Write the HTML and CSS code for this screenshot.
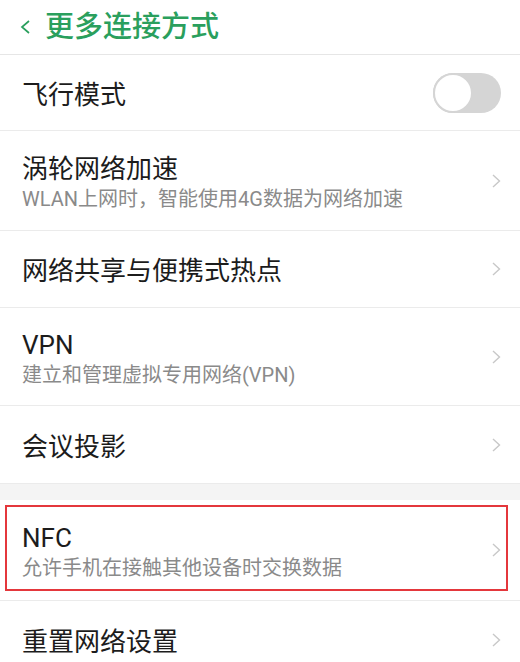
FILE: index.html
```html
<!DOCTYPE html>
<html lang="zh-CN">
<head>
<meta charset="utf-8">
<link rel="stylesheet" href="styles.css">
</head>
<body>
<div class="page">
  <header class="header">
    <svg class="back" width="11" height="14" viewBox="0 0 11 14"><path d="M9 1 L2 7 L9 13" fill="none" stroke="#2a9f5d" stroke-width="1.7"/></svg>
    <span class="title">更多连接方式</span>
  </header>
  <div class="row h75">
    <div class="text"><div class="label">飞行模式</div></div>
    <div class="toggle"><div class="knob"></div></div>
  </div>
  <div class="row h99">
    <div class="text"><div class="label">涡轮网络加速</div><div class="sub">WLAN上网时，智能使用4G数据为网络加速</div></div>
    <svg class="chev" width="9" height="14" viewBox="0 0 9 14"><path d="M1 1 L7.5 7 L1 13" fill="none" stroke="#c8c8c8" stroke-width="1.4"/></svg>
  </div>
  <div class="row h76">
    <div class="text"><div class="label">网络共享与便携式热点</div></div>
    <svg class="chev" width="9" height="14" viewBox="0 0 9 14"><path d="M1 1 L7.5 7 L1 13" fill="none" stroke="#c8c8c8" stroke-width="1.4"/></svg>
  </div>
  <div class="row h97">
    <div class="text"><div class="label">VPN</div><div class="sub">建立和管理虚拟专用网络(VPN)</div></div>
    <svg class="chev" width="9" height="14" viewBox="0 0 9 14"><path d="M1 1 L7.5 7 L1 13" fill="none" stroke="#c8c8c8" stroke-width="1.4"/></svg>
  </div>
  <div class="row h77">
    <div class="text"><div class="label">会议投影</div></div>
    <svg class="chev" width="9" height="14" viewBox="0 0 9 14"><path d="M1 1 L7.5 7 L1 13" fill="none" stroke="#c8c8c8" stroke-width="1.4"/></svg>
  </div>
  <div class="gap"></div>
  <div class="row h100 highlighted">
    <div class="text"><div class="label">NFC</div><div class="sub">允许手机在接触其他设备时交换数据</div></div>
    <svg class="chev" width="9" height="14" viewBox="0 0 9 14"><path d="M1 1 L7.5 7 L1 13" fill="none" stroke="#c8c8c8" stroke-width="1.4"/></svg>
    <div class="mark"></div>
  </div>
  <div class="row h76 last">
    <div class="text"><div class="label">重置网络设置</div></div>
    <svg class="chev" width="9" height="14" viewBox="0 0 9 14"><path d="M1 1 L7.5 7 L1 13" fill="none" stroke="#c8c8c8" stroke-width="1.4"/></svg>
  </div>
</div>
</body>
</html>
```
FILE: styles.css
```css
* { box-sizing: border-box; }
html, body { margin: 0; padding: 0; background: #fff; }
body { font-family: Roboto, "Noto Sans CJK SC", sans-serif; color: #1c1c1c; }
.page { width: 520px; height: 662px; overflow: hidden; background: #fff; }
.header {
  height: 55px;
  border-bottom: 1px solid #e6e6e6;
  display: flex;
  align-items: center;
  padding-left: 20px;
  gap: 14px;
}
.back { flex: none; margin-top: 0; }
.title { font-size: 29px; font-weight: 500; color: #2a9f5d; line-height: 1; margin-top: 0; }
.row {
  display: flex;
  align-items: center;
  padding: 0 19px 0 22px;
  border-bottom: 1px solid #ebebeb;
  position: relative;
}
.row.last { border-bottom: none; }
.h75 { height: 76px; }
.h99 { height: 100px; }
.h76 { height: 77px; }
.h97 { height: 98px; }
.h77 { height: 78px; }
.h100 { height: 101px; }
.text { flex: 1; display: flex; flex-direction: column; padding-top: 4px; }
.label { font-size: 26px; line-height: 32px; color: #1c1c1c; }
.sub { font-size: 20px; line-height: 28px; color: #8a8a8a; }
.chev { flex: none; }
.toggle {
  width: 68px; height: 40px; border-radius: 20px;
  background: #d5d5d5;
  display: flex; align-items: center;
}
.knob {
  width: 40px; height: 40px; border-radius: 50%;
  background: #fff;
  border: 2px solid #d5d5d5;
}
.gap { height: 16px; background: #f4f4f4; }
.mark {
  position: absolute;
  left: 5px; top: 5px; right: 12px; bottom: 9px;
  border: 2px solid #e4373c;
  pointer-events: none;
}
```
